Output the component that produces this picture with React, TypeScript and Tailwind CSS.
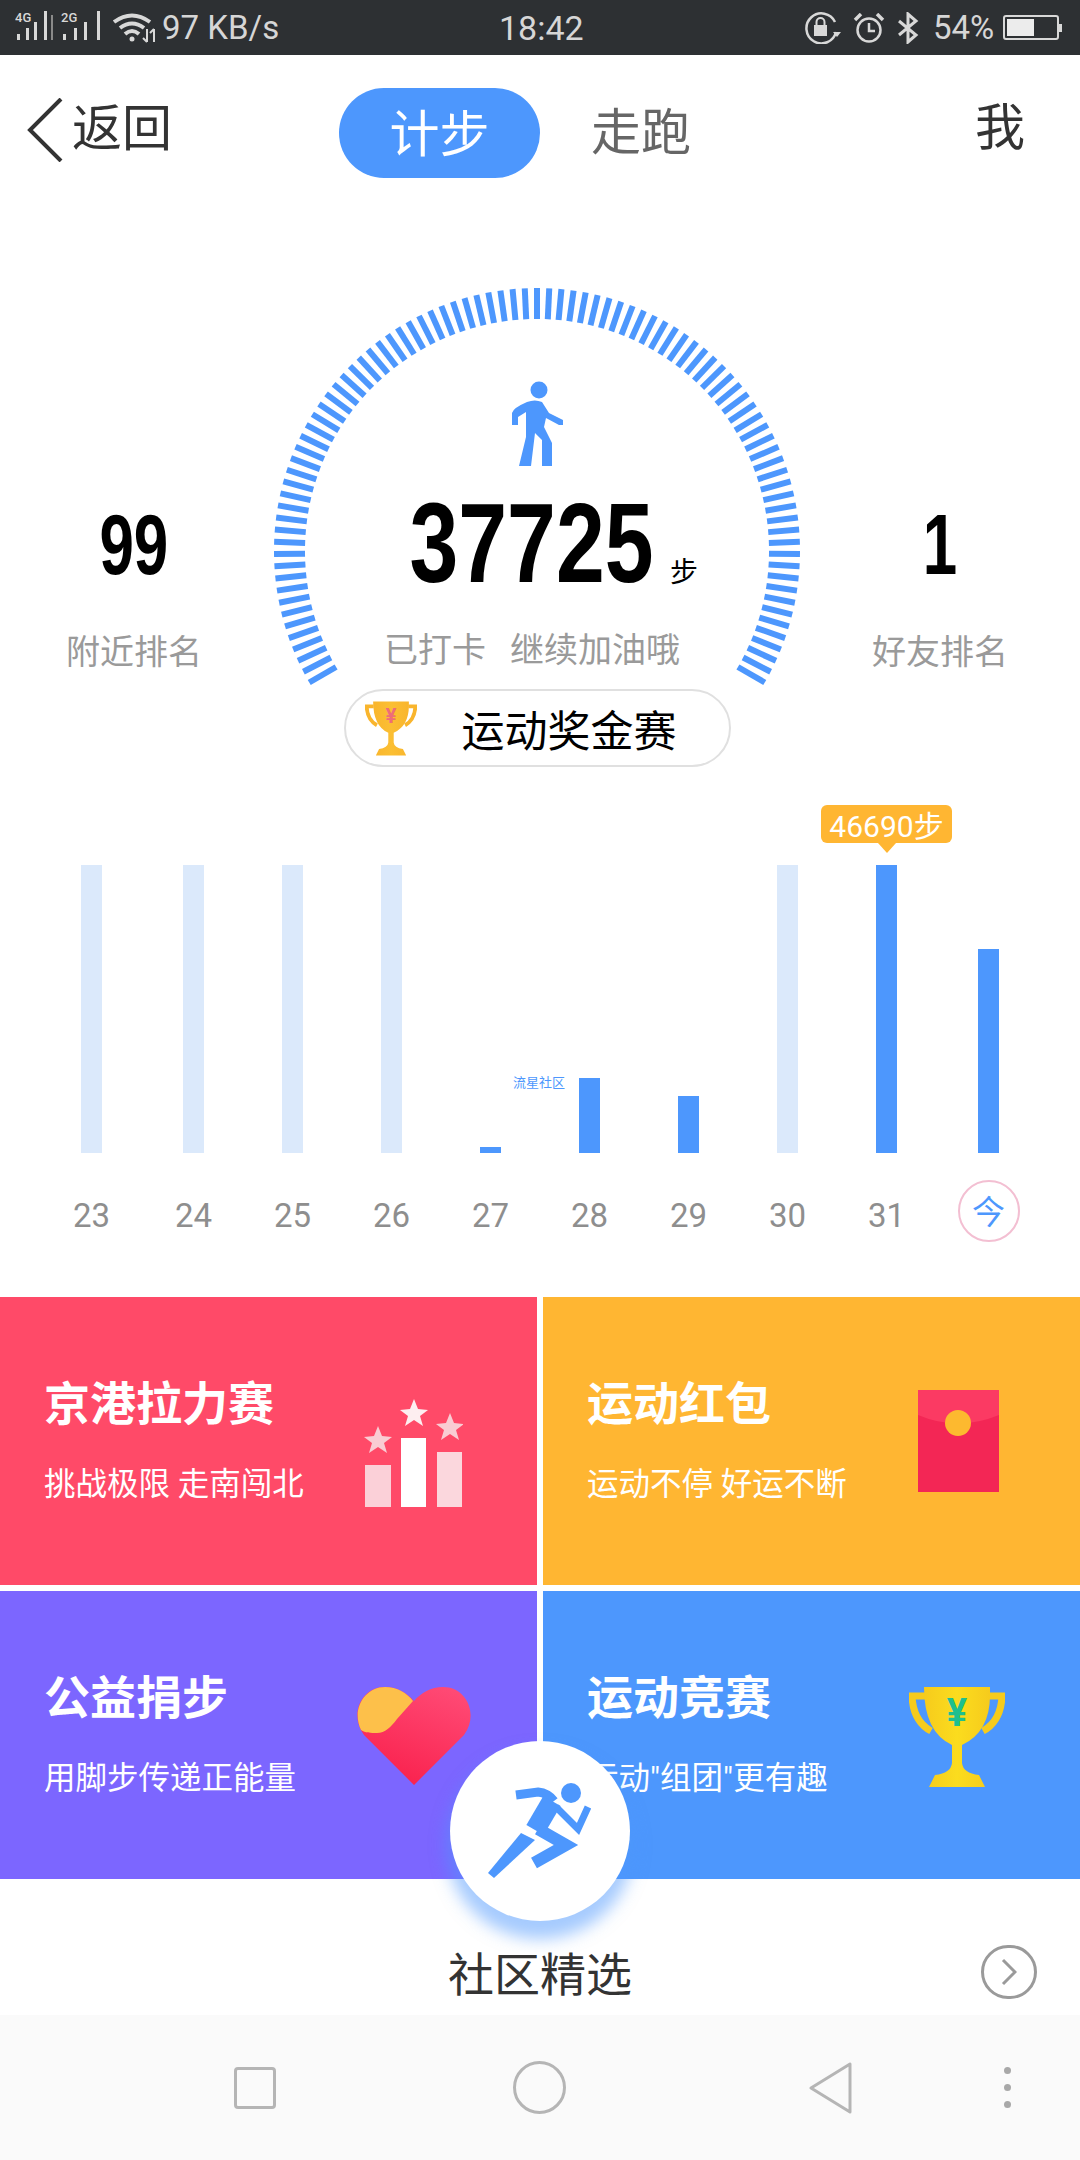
import React from 'react';

const cjk = "font-['Noto_Sans_CJK_SC',sans-serif]";
const digits = "font-['Liberation_Sans',sans-serif]";

const days = [
    { label: '23', height: 'h-[288px]', light: true, ml: 'ml-[81px]' },
    { label: '24', height: 'h-[288px]', light: true, ml: 'ml-[81px]' },
    { label: '25', height: 'h-[288px]', light: true, ml: 'ml-[78px]' },
    { label: '26', height: 'h-[288px]', light: true, ml: 'ml-[78px]' },
    { label: '27', height: 'h-[6px]', light: false, ml: 'ml-[78px]' },
    { label: '28', height: 'h-[75px]', light: false, ml: 'ml-[78px]' },
    { label: '29', height: 'h-[57px]', light: false, ml: 'ml-[78px]' },
    { label: '30', height: 'h-[288px]', light: true, ml: 'ml-[78px]' },
    { label: '31', height: 'h-[288px]', light: false, ml: 'ml-[78px]' },
    { label: '今', height: 'h-[204px]', light: false, ml: 'ml-[81px]' },
];

const Signal = ({ name, bars }: { name: string; bars: number[] }) => (
    <svg width="44" height="34" viewBox="0 0 44 34">
        <text x="0" y="11" fontSize="13" fontWeight="500" fill="#d8d8d8" fontFamily="Roboto">{name}</text>
        {bars.map((x, i) => (
            <rect key={x} x={x} y={i === 3 ? 0 : 29 - (i + 1) * 6} width="3" height={i === 3 ? 29 : (i + 1) * 6} fill="#d8d8d8" />
        ))}
    </svg>
);

const StatusBar = () => (
    <div className="h-[55px] bg-[#2d3033] flex items-center text-[#d6d6d6] font-['Roboto',sans-serif]">
        <div className="w-[499px] flex items-center pl-[15px]">
            <div className="mt-[1px]"><Signal name="4G" bars={[2, 11, 19, 29]} /></div>
            <div className="w-[2px] h-[25px] bg-[#8a8a8a] -ml-[8px] mr-[8px]" />
            <div className="mt-[1px]"><Signal name="2G" bars={[2, 13, 23, 36]} /></div>
            <svg className="ml-[7px]" width="46" height="30" viewBox="0 0 46 30" fill="none" stroke="#d8d8d8" strokeWidth="4">
                <path d="M2 9 Q20 -4 38 9" />
                <path d="M8 15 Q20 6 32 15" />
                <path d="M13 21 Q20 15 27 21" />
                <circle cx="20" cy="26" r="2.5" fill="#d8d8d8" stroke="none" />
                <path d="M35 16 V29 M31 25 L35 29 M42 16 V29 M42 16 L38 20" strokeWidth="2" />
            </svg>
            <span className="ml-[4px] text-[33px] leading-[40px] whitespace-nowrap">97 KB/s</span>
        </div>
        <span className="w-[83px] text-[34px] leading-[40px] text-center">18:42</span>
        <div className="flex-1 flex items-center pl-[222px]">
            <svg width="38" height="32" viewBox="0 0 38 32" fill="none" stroke="#d8d8d8" strokeWidth="2.5">
                <path d="M32 20 A15 15 0 1 1 31 10" />
                <path d="M29 20 H37 L33 25 Z" fill="#d8d8d8" stroke="none" />
                <rect x="10" y="13" width="13" height="11" fill="#d8d8d8" stroke="none" />
                <path d="M12.5 13 V10 A4 4 0 0 1 20.5 10 V13" strokeWidth="2" />
            </svg>
            <svg className="ml-[11px]" width="32" height="30" viewBox="0 0 32 30" fill="none" stroke="#d8d8d8" strokeWidth="2.5">
                <circle cx="16" cy="17" r="11.5" />
                <path d="M16 10 V18 H22" />
                <path d="M2 7 L8 1 M30 7 L24 1" strokeWidth="3.5" />
            </svg>
            <svg className="ml-[10px]" width="26" height="32" viewBox="0 0 26 32" fill="none" stroke="#d8d8d8" strokeWidth="3">
                <path d="M4 9 L21 23 L13 30 V2 L21 9 L4 23" />
            </svg>
            <span className="ml-[12px] text-[33px] leading-[40px]">54%</span>
            <div className="ml-[9px] flex items-center">
                <div className="w-[56px] h-[25px] border-2 border-[#d8d8d8] rounded-[3px] p-[2px]">
                    <div className="w-[27px] h-full bg-[#ececec]" />
                </div>
                <div className="w-[3px] h-[8px] bg-[#d8d8d8]" />
            </div>
        </div>
    </div>
);

const Nav = () => (
    <div className={`h-[150px] flex items-start ${cjk} text-[50px] leading-[60px]`}>
        <svg className="ml-[27px] mt-[43px]" width="36" height="64" viewBox="0 0 36 64" fill="none" stroke="#333" strokeWidth="4">
            <path d="M34 1 L3 32 L34 63" />
        </svg>
        <span className="ml-[9px] mt-[39px] text-[#333]">返回</span>
        <div className="ml-[167px] mt-[33px] w-[201px] h-[90px] rounded-full bg-[#4d97fd] text-white flex items-center justify-center pb-[6px]">计步</div>
        <span className="ml-[51px] mt-[43px] text-[#666]">走跑</span>
        <span className="ml-[284px] mt-[38px] text-[#333]">我</span>
    </div>
);

const Gauge = () => {
    const ticks = [];
    for (let i = 0; i <= 90; i++) {
        const a = ((150 + (240 * i) / 90) * Math.PI) / 180;
        ticks.push(
            <line key={i} x1={269 + 232 * Math.cos(a)} y1={346 + 232 * Math.sin(a)} x2={269 + 263 * Math.cos(a)} y2={346 + 263 * Math.sin(a)} />
        );
    }
    return (
        <svg className="absolute top-0 left-0" width="538" height="500" viewBox="0 0 538 500" stroke="#4d97fd" strokeWidth="6">
            {ticks}
        </svg>
    );
};

const Trophy = ({ id, from, to, yen }: { id: string; from: string; to: string; yen: string }) => (
    <svg className="w-full h-full" viewBox="0 0 96 100">
        <defs>
            <linearGradient id={id} x1="0" x2="1" y1="0" y2="0">
                <stop offset="0" stopColor={from} />
                <stop offset="0.5" stopColor={to} />
                <stop offset="1" stopColor={from} />
            </linearGradient>
        </defs>
        <path d="M16 9 H3 Q4 34 22 44 M80 9 H93 Q92 34 74 44" fill="none" stroke={from} strokeWidth="7" />
        <path d="M15 0 H81 V8 Q81 45 53 58 V76 Q54 86 70 88 L76 100 H20 L26 88 Q42 86 43 76 V58 Q15 45 15 0 Z" fill={`url(#${id})`} />
        <text x="48" y="39" fontSize="38" fontWeight="700" textAnchor="middle" fill={yen} fontFamily="Roboto">¥</text>
    </svg>
);

const Walker = () => (
    <svg width="52" height="85" viewBox="0 0 52 85" fill="#4d97fd">
        <circle cx="28" cy="9" r="8.5" />
        <path d="M16 21 Q24 18 31 21 L38 32 L52 39 L52 44 L48 44 L35 37 L33 46 L41 62 L41 85 L31 85 L31 59 L24 52 L20 85 L8 85 L15 56 L15 31 L7 36 L7 44 L1 44 L1 32 Q2 27 16 21 Z" />
    </svg>
);

const Rank = ({ value, label }: { value: string; label: string }) => (
    <div className="flex flex-col items-center pt-[289px]">
        <div className={`h-[100px] leading-[100px] text-black text-[86px] font-bold scale-x-[0.72] ${digits}`}>{value}</div>
        <div className={`mt-[34px] text-[34px] leading-[44px] text-[#9a9a9a] whitespace-nowrap ${cjk}`}>{label}</div>
    </div>
);

const GaugeSection = () => (
    <div className="h-[585px] grid grid-cols-[268px_538px_268px]">
        <Rank value="99" label="附近排名" />
        <div className="relative flex flex-col items-center pt-[176px]">
            <Gauge />
            <Walker />
            <div className="mt-[17px] ml-[36px] h-[120px] flex items-baseline whitespace-nowrap">
                <div className="w-[239px] flex justify-center">
                    <span className={`text-[114px] leading-[120px] font-bold text-black scale-x-[0.77] ${digits}`}>37725</span>
                </div>
                <span className={`ml-[19px] text-[28px] text-black ${cjk}`}>步</span>
            </div>
            <div className={`mt-[23px] mr-[10px] flex gap-[24px] text-[34px] leading-[44px] text-[#9a9a9a] whitespace-nowrap ${cjk}`}>
                <span>已打卡</span>
                <span>继续加油哦</span>
            </div>
            <div className="mt-[19px] w-[387px] h-[78px] rounded-full border-2 border-[#e0e0e0] bg-white flex items-center pl-[19px] relative">
                <div className="w-[52px] h-[55px]"><Trophy id="cupSmall" from="#f9b52d" to="#fbbf33" yen="#ef6c78" /></div>
                <span className={`ml-[45px] text-[43px] leading-[50px] text-black ${cjk}`}>运动奖金赛</span>
            </div>
        </div>
        <Rank value="1" label="好友排名" />
    </div>
);

const Chart = () => (
    <div className="h-[507px] pt-[75px] flex items-start font-['Roboto',sans-serif]">
        {days.map((d) => (
            <div key={d.label} className={`${d.ml} w-[21px] flex flex-col items-center shrink-0`}>
                <div className="relative h-[288px] w-[21px] flex items-end">
                    {d.label === '31' && (
                        <div className="absolute -top-[60px] -left-[55px] w-[131px] h-[38px] rounded-[6px] bg-[#ffb632] text-white text-[30px] leading-[38px] text-center whitespace-nowrap">
                            46690<span className={cjk}>步</span>
                            <div className="absolute left-[57px] top-[38px] w-0 h-0 border-x-[9px] border-x-transparent border-t-[10px] border-t-[#ffb632]" />
                        </div>
                    )}
                    {d.label === '28' && (
                        <span className={`absolute -left-[66px] top-[210px] text-[13px] leading-[14px] text-[#4d97fd] whitespace-nowrap ${cjk}`}>流星社区</span>
                    )}
                    <div className={`w-[21px] ${d.light ? 'bg-[#dbe9fb]' : 'bg-[#4d97fd]'} ${d.height}`} />
                </div>
                {d.label === '今' ? (
                    <div className={`mt-[27px] w-[62px] h-[62px] shrink-0 rounded-full border-2 border-[#f3bfd2] flex items-center justify-center text-[33px] text-[#4d97fd] ${cjk}`}>今</div>
                ) : (
                    <div className="mt-[27px] h-[72px] leading-[72px] text-[33px] text-[#8e8e8e] whitespace-nowrap">{d.label}</div>
                )}
            </div>
        ))}
    </div>
);

const Podium = () => (
    <svg width="100" height="108" viewBox="0 0 100 108">
        <rect x="2" y="66" width="26" height="42" fill="#fbd0d8" />
        <rect x="38" y="39" width="25" height="69" fill="#fff" />
        <rect x="74" y="53" width="25" height="55" fill="#fbd7dd" />
        <path d="M15 27 L19 37 L29 38 L21 44 L24 54 L15 48 L6 54 L9 44 L1 38 L11 37 Z" fill="#f9ccd3" />
        <path d="M51 0 L55 10 L65 11 L57 17 L60 27 L51 21 L42 27 L45 17 L37 11 L47 10 Z" fill="#fdeef0" />
        <path d="M87 14 L91 24 L101 25 L93 31 L96 41 L87 35 L78 41 L81 31 L73 25 L83 24 Z" fill="#f9ccd3" />
    </svg>
);

const RedPacket = () => (
    <svg width="81" height="102" viewBox="0 0 81 102">
        <rect width="81" height="102" fill="#f32655" />
        <path d="M0 0 H81 V25 Q40 42 0 25 Z" fill="#fb3a63" />
        <ellipse cx="40" cy="33" rx="13" ry="13" fill="#fdb92f" />
    </svg>
);

const Heart = () => (
    <svg width="114" height="98" viewBox="0 0 114 98">
        <defs>
            <linearGradient id="heartRed" x1="0.8" y1="0" x2="0.3" y2="1">
                <stop offset="0" stopColor="#ff4a75" />
                <stop offset="1" stopColor="#f9204c" />
            </linearGradient>
        </defs>
        <path d="M57 98 L7 48 C-8 28 4 0 28 0 C40 0 50 6 57 14 C64 6 74 0 86 0 C110 0 122 28 107 48 Z" fill="url(#heartRed)" />
        <path d="M4 43 C-6 22 8 0 28 0 C40 0 50 6 56 14 L40 32 C34 40 28 46 20 46 C14 46 8 46 4 43 Z" fill="#fdc04a" />
    </svg>
);

const cards = [
    { title: '京港拉力赛', sub: '挑战极限 走南闯北', bg: 'bg-[#ff4a68]', icon: <Podium />, place: 'mt-[102px] mr-[74px]' },
    { title: '运动红包', sub: '运动不停 好运不断', bg: 'bg-[#ffb632]', icon: <RedPacket />, place: 'mt-[93px] mr-[81px]' },
    { title: '公益捐步', sub: '用脚步传递正能量', bg: 'bg-[#7c66ff]', icon: <Heart />, place: 'mt-[96px] mr-[66px]' },
    { title: '运动竞赛', sub: '运动"组团"更有趣', bg: 'bg-[#4d97fd]', icon: <div className="w-[96px] h-[100px]"><Trophy id="cupBig" from="#f6cb1c" to="#fbdc1e" yen="#1fbf8f" /></div>, place: 'mt-[96px] mr-[75px]' },
];

const Cards = () => (
    <div className="grid grid-cols-2 grid-rows-[288px_288px] gap-[6px] h-[582px]">
        {cards.map((c) => (
            <div key={c.title} className={`${c.bg} flex items-start justify-between text-white ${cjk}`}>
                <div className="pl-[44px] pt-[70px]">
                    <div className="text-[46px] leading-[66px] font-bold">{c.title}</div>
                    <div className="mt-[30px] text-[31.5px] leading-[44px] whitespace-nowrap font-['Roboto','Noto_Sans_CJK_SC',sans-serif]">{c.sub}</div>
                </div>
                <div className={c.place}>{c.icon}</div>
            </div>
        ))}
    </div>
);

const Community = () => (
    <div className={`h-[136px] grid grid-cols-[1fr_auto_1fr] items-start pt-[67px] ${cjk}`}>
        <div />
        <span className="text-[46px] leading-[50px] text-[#333]">社区精选</span>
        <div className="justify-self-end mr-[43px] -mt-[1px] w-[56px] h-[54px] rounded-full border-[3px] border-[#9a9a9a] flex items-center justify-center">
            <svg width="16" height="28" viewBox="0 0 16 28" fill="none" stroke="#9a9a9a" strokeWidth="3">
                <path d="M2 2 L14 14 L2 26" />
            </svg>
        </div>
    </div>
);

const BottomBar = () => (
    <div className="h-[145px] bg-[#fafafa] flex items-center">
        <div className="ml-[234px] w-[42px] h-[42px] rounded-[4px] border-[3px] border-[#b5b5b5]" />
        <div className="ml-[237px] w-[53px] h-[53px] rounded-full border-[3px] border-[#b5b5b5]" />
        <svg className="ml-[243px]" width="44" height="52" viewBox="0 0 44 52" fill="none" stroke="#b5b5b5" strokeWidth="3" strokeLinejoin="round">
            <path d="M2 26 L41 2 V50 Z" />
        </svg>
        <div className="ml-[151px] flex flex-col gap-[10px]">
            <div className="w-[7px] h-[7px] rounded-full bg-[#a8a8a8]" />
            <div className="w-[7px] h-[7px] rounded-full bg-[#a8a8a8]" />
            <div className="w-[7px] h-[7px] rounded-full bg-[#a8a8a8]" />
        </div>
    </div>
);

const RunButton = () => (
    <div className="absolute left-[450px] top-[1741px] w-[180px] h-[180px] rounded-full bg-white shadow-[0_14px_16px_4px_rgba(77,151,253,0.5)] flex items-center justify-center">
        <svg width="105" height="96" viewBox="0 0 105 96" fill="none" stroke="#4d97fd">
            <circle cx="83" cy="10" r="10" fill="#4d97fd" stroke="none" />
            <path d="M28 12 L50 9 Q60 10 66 18" strokeWidth="9" />
            <path d="M64 18 L47 47" strokeWidth="20" />
            <path d="M68 24 L90 46 L100 24" strokeWidth="7" />
            <path d="M50 46 L78 62 L46 80" strokeWidth="12" />
            <path d="M33 50 L47 57 L6 95 L0 90 Z" fill="#4d97fd" stroke="none" />
        </svg>
    </div>
);

export default function App() {
    return (
        <div className="relative w-[1080px] h-[2160px] bg-white overflow-hidden">
            <StatusBar />
            <Nav />
            <GaugeSection />
            <Chart />
            <Cards />
            <Community />
            <BottomBar />
            <RunButton />
        </div>
    );
}
